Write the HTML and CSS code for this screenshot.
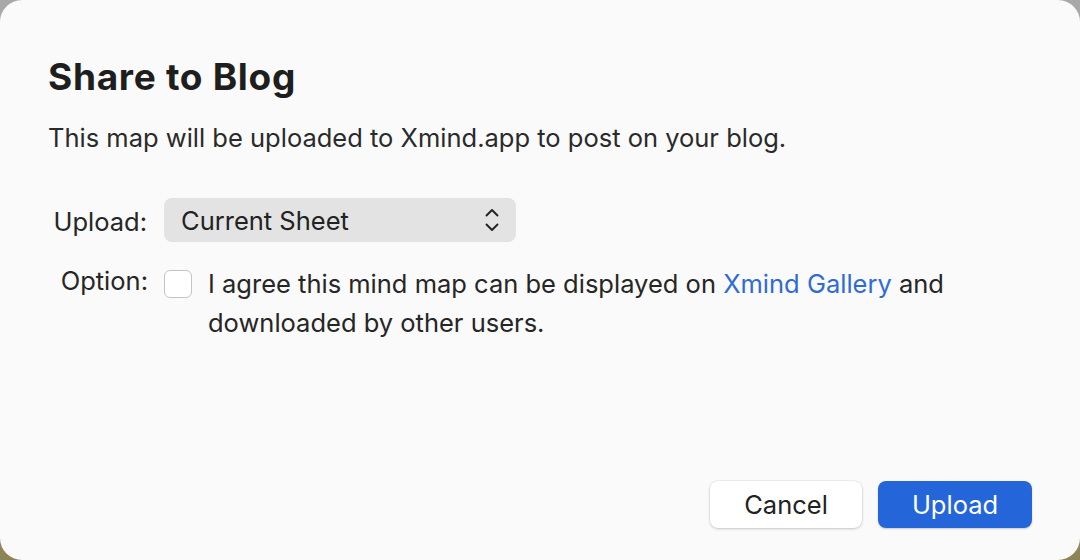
FILE: index.html
```html
<!DOCTYPE html>
<html lang="en">
<head>
    <meta charset="UTF-8">
    <title>Share to Blog</title>
    <link rel="stylesheet" href="styles.css">
</head>
<body>
<div class="dialog">
    <h1 class="title">Share to Blog</h1>
    <p class="desc">This map will be uploaded to Xmind.app to post on your blog.</p>

    <div class="form">
        <div class="label label_upload">Upload:</div>
        <div class="select">
            <span>Current Sheet</span>
            <svg class="chevrons" width="16" height="26" viewBox="0 0 16 26">
                <path d="M2.5 8.5 L8 3 L13.5 8.5" fill="none" stroke="#222" stroke-width="1.9" stroke-linecap="round" stroke-linejoin="round"/>
                <path d="M2.5 17.5 L8 23 L13.5 17.5" fill="none" stroke="#222" stroke-width="1.9" stroke-linecap="round" stroke-linejoin="round"/>
            </svg>
        </div>

        <div class="label label_option">Option:</div>
        <div class="option">
            <span class="checkbox"></span>
            <p class="option_text">I agree this mind map can be displayed on <a class="link">Xmind Gallery</a> and downloaded by other users.</p>
        </div>
    </div>

    <div class="buttons">
        <button class="btn btn_cancel">Cancel</button>
        <button class="btn btn_upload">Upload</button>
    </div>
</div>
</body>
</html>
```

FILE: styles.css
```css
html, body {
    margin: 0;
    height: 100%;
}

body {
    background: linear-gradient(#a8a8a8, #b4b4b0 50%, #8c8456);
    font-family: Inter, "Noto Sans", "Liberation Sans", sans-serif;
    color: #262626;
}

.dialog {
    box-sizing: border-box;
    width: 1080px;
    height: 560px;
    background-color: #fafafa;
    border-radius: 22px;
    padding: 54px 48px 32px 48px;
    display: flex;
    flex-direction: column;
}

.title {
    margin: 0;
    font-size: 37px;
    font-weight: 700;
    line-height: 46px;
    color: #1e1e1e;
    letter-spacing: 0.7px;
}

.desc {
    margin: 22px 0 0 0;
    font-size: 25.5px;
    line-height: 32px;
    color: #2a2a2a;
}

.form {
    margin-top: 44px;
    display: grid;
    grid-template-columns: 100px 352px;
    column-gap: 16px;
    row-gap: 20px;
    align-items: start;
}

.label {
    text-align: right;
    font-size: 25.5px;
    color: #262626;
}

.label_upload {
    line-height: 44px;
    margin-top: 2px;
    margin-right: 1px;
}

.label_option {
    line-height: 39px;
    margin-top: -3px;
}

.select {
    height: 44px;
    border-radius: 8px;
    background-color: #e3e3e3;
    display: flex;
    align-items: center;
    justify-content: space-between;
    padding: 0 16px 0 17px;
    font-size: 25.5px;
    color: #222;
}

.chevrons {
    display: block;
}

.option {
    display: flex;
    align-items: flex-start;
    width: 820px;
}

.checkbox {
    flex: none;
    box-sizing: border-box;
    width: 28px;
    height: 28px;
    margin-top: 6px;
    border: 1px solid #c4c4c4;
    border-radius: 6px;
    background-color: #fff;
}

.option_text {
    margin: 0 0 0 16px;
    font-size: 25.5px;
    line-height: 39px;
    color: #262626;
}

.link {
    color: #2f6bd6;
}

.buttons {
    margin-top: auto;
    display: flex;
    justify-content: flex-end;
    gap: 16px;
}

.btn {
    height: 47px;
    border-radius: 8px;
    border: none;
    font-family: inherit;
    font-size: 25.5px;
    padding: 0;
}

.btn_cancel {
    width: 152px;
    background-color: #fff;
    color: #222;
    box-shadow: 0 0 0 0.5px rgba(0, 0, 0, 0.08), 0 1px 3px rgba(0, 0, 0, 0.18);
}

.btn_upload {
    width: 154px;
    background-color: #2466d9;
    color: #fff;
    box-shadow: 0 1px 2px rgba(0, 0, 0, 0.2);
}
```
